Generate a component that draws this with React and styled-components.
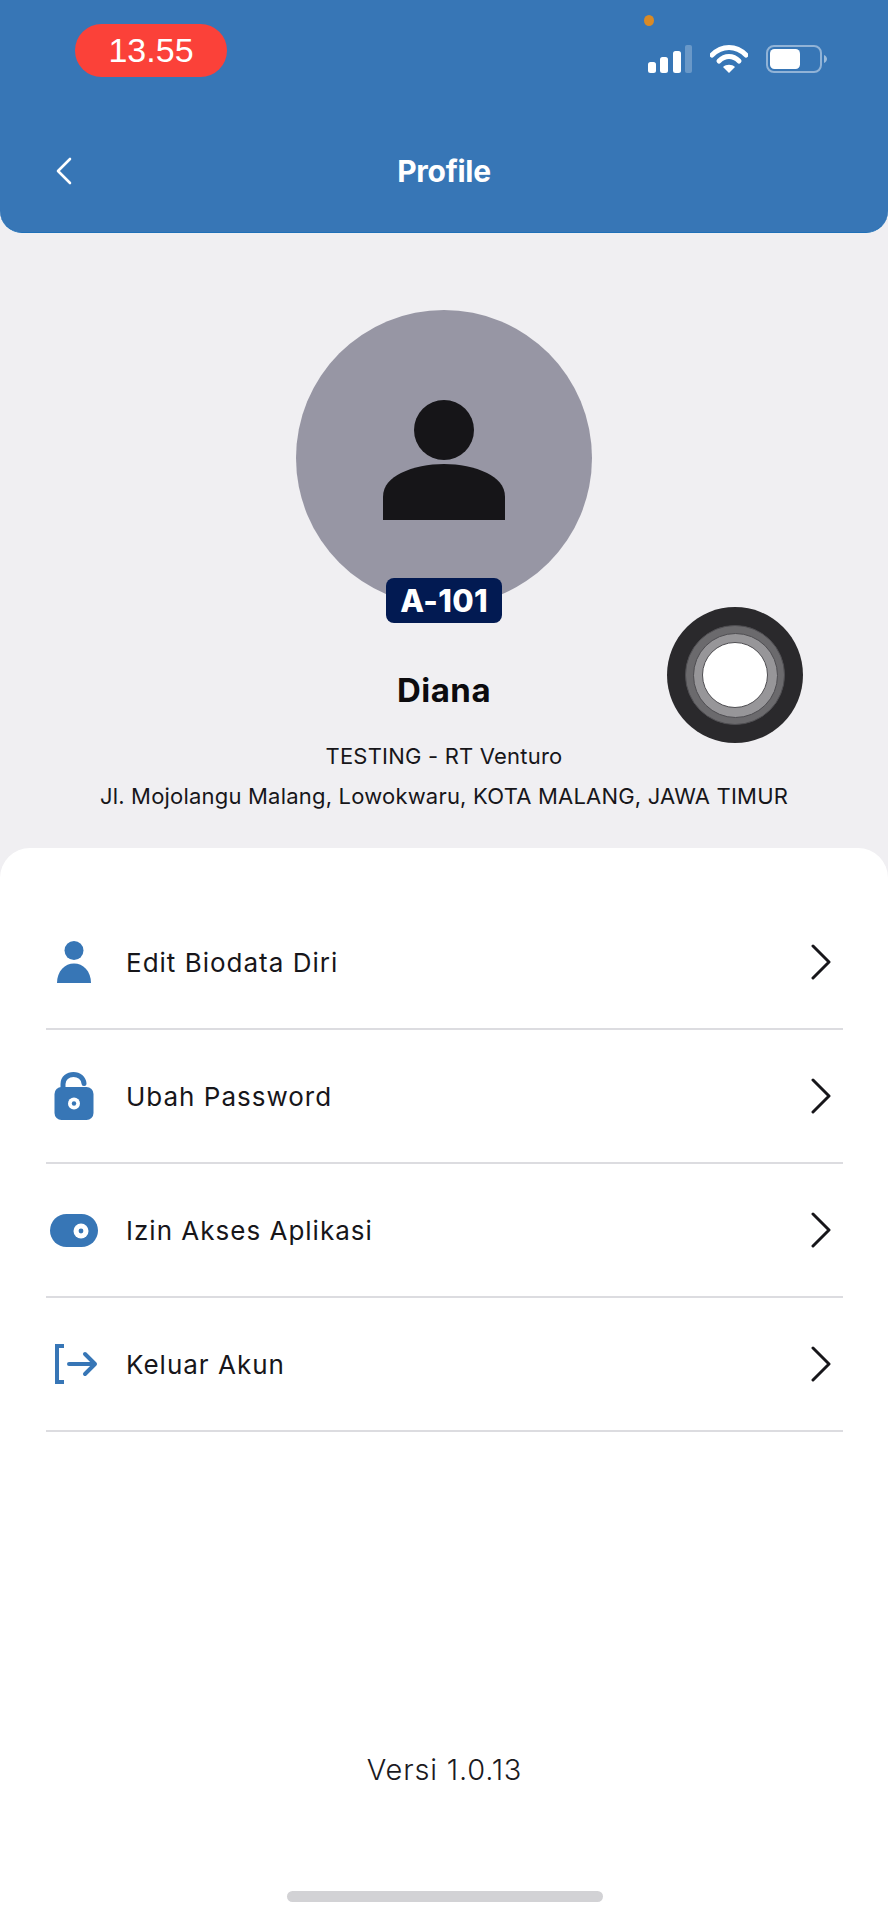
import React from "react";
import styled, { createGlobalStyle } from "styled-components";

const Global = createGlobalStyle`
  html, body { margin: 0; padding: 0; background: #f0eff2; }
  * { box-sizing: border-box; }
`;
const Page = styled.div`
  position: relative; width: 888px; height: 1920px; display: flex; flex-direction: column;
  background: #f0eff2; overflow: hidden; font-family: Inter, "Noto Sans", sans-serif; color: #111014;
`;
const Header = styled.header`
  height: 233px; flex: none; background: #3776b6; border-radius: 0 0 22px 22px;
  border-bottom: 1px solid #1f70b8;
`;
const StatusRow = styled.div`
  display: flex; justify-content: space-between; align-items: flex-start;
  padding: 24px 60px 0 75px;
`;
const TimePill = styled.div`
  width: 152px; height: 53px; border-radius: 27px; background: #fb4139; color: #fff;
  display: flex; align-items: center; justify-content: center;
  font: 400 34px "Liberation Sans", Arial, sans-serif;
`;
const StatusIcons = styled.div`
  display: flex; align-items: center; gap: 18px; margin-top: 21px;
`;
const PrivacyDot = styled.span`
  position: absolute; left: 644px; top: 15px; width: 10px; height: 11px; border-radius: 50%; background: #d98a26;
`;
const NavRow = styled.div`
  display: grid; grid-template-columns: 1fr auto 1fr; align-items: center;
  height: 48px; margin-top: 70px; padding-left: 55px;
`;
const BackButton = styled.div`
  display: flex; align-items: center;
`;
const Title = styled.h1`
  margin: 0 0 0 -55px; font: 700 30px Inter, sans-serif; color: #fff; letter-spacing: -0.3px;
`;
const Profile = styled.section`
  flex: none; height: 615px; padding-top: 77px; display: flex; flex-direction: column; align-items: center;
`;
const Avatar = styled.div`
  position: relative; width: 296px; height: 296px; border-radius: 50%; background: #9796a4;
  display: flex; align-items: center; justify-content: center;
`;
const UnitBadge = styled.div`
  position: absolute; left: 90px; top: 268px; width: 116px; height: 45px; border-radius: 8px;
  background: #021a52; color: #fff; display: flex; align-items: center; justify-content: center;
  font: 800 31px Inter, sans-serif; letter-spacing: 0.3px;
`;
const Name = styled.div`
  margin-top: 64px; font: 700 33px/40px Inter, sans-serif; letter-spacing: 0.5px; color: #0c0b0e;
`;
const InfoLine = styled.div`
  font: 400 ${p => p.$size}px/40px Inter, sans-serif; letter-spacing: ${p => p.$track}px; margin-top: ${p => p.$top}px;
  color: #17161a; white-space: nowrap;
`;
const AssistiveTouch = styled.div`
  position: absolute; left: 667px; top: 607px; width: 136px; height: 136px; border-radius: 50%;
  background: #2a292c; display: flex; align-items: center; justify-content: center;
`;
const Ring = styled.div`
  width: ${p => p.$size}px; height: ${p => p.$size}px; border-radius: 50%; background: ${p => p.$bg};
  display: flex; align-items: center; justify-content: center; border: 1px solid #4f4e52;
`;
const Card = styled.main`
  flex: 1; background: #fff; border-radius: 30px 30px 0 0; padding: 48px 45px 18px 46px;
  display: flex; flex-direction: column; align-items: stretch;
`;
const Row = styled.div`
  height: 134px; display: flex; align-items: center; border-bottom: 2px solid #dcdce0; flex: none;
`;
const IconBox = styled.div`
  width: 56px; display: flex; justify-content: center; margin-right: 24px; flex: none;
`;
const RowLabel = styled.div`
  flex: 1; font: 400 26px Inter, sans-serif; letter-spacing: 1px; color: #17161a;
`;
const Chevron = styled.div`
  width: 32px; display: flex; justify-content: flex-start; margin-right: 2px;
`;
const Version = styled.div`
  margin-top: auto; text-align: center; font: 300 29px/40px Inter, sans-serif; letter-spacing: 0.8px; color: #1b1a1e;
`;
const HomeBar = styled.div`
  align-self: center; width: 316px; height: 11px; border-radius: 6px; background: #d2d2d5; margin-top: 101px;
`;

const Blue = "#3776b6";
const PersonIcon = () => (
  <svg width="36" height="44" viewBox="0 0 36 44">
    <circle cx="18" cy="10.5" r="9.5" fill={Blue} />
    <path d="M1 43 C1 31 9 23.5 18 23.5 C27 23.5 35 31 35 43 Z" fill={Blue} />
  </svg>
);
const LockIcon = () => (
  <svg width="40" height="48" viewBox="0 0 40 48">
    <path d="M9 20 V12 C9 6 14 2.5 19.5 2.5 C25 2.5 29.5 6 30 11.5" fill="none" stroke={Blue} strokeWidth="5" strokeLinecap="round" />
    <rect x="0.5" y="15" width="39" height="33" rx="7" fill={Blue} />
    <circle cx="20" cy="31.5" r="6" fill="#fff" />
    <circle cx="20" cy="31.5" r="2.2" fill={Blue} />
  </svg>
);
const ToggleIcon = () => (
  <svg width="48" height="33" viewBox="0 0 48 33">
    <rect x="0" y="0" width="48" height="33" rx="16.5" fill={Blue} />
    <circle cx="31" cy="17" r="7.5" fill="#fff" />
    <circle cx="31" cy="17" r="2.4" fill={Blue} />
  </svg>
);
const LogoutIcon = () => (
  <svg width="44" height="40" viewBox="0 0 44 40" style={{ marginLeft: 4 }}>
    <path d="M10 2 H3 V38 H10" fill="none" stroke={Blue} strokeWidth="4" />
    <path d="M15 20 H40 M31 10 L41 20 L31 30" fill="none" stroke={Blue} strokeWidth="4" strokeLinecap="round" strokeLinejoin="round" />
  </svg>
);
const RowChevron = () => (
  <svg width="24" height="36" viewBox="0 0 24 36">
    <path d="M4 2 L20 18 L4 34" fill="none" stroke="#17161a" strokeWidth="3" strokeLinecap="round" strokeLinejoin="round" />
  </svg>
);

const items = [
  { label: "Edit Biodata Diri", Icon: PersonIcon },
  { label: "Ubah Password", Icon: LockIcon },
  { label: "Izin Akses Aplikasi", Icon: ToggleIcon },
  { label: "Keluar Akun", Icon: LogoutIcon },
];

export default function App() {
  return (
    <Page>
      <Global />
      <Header>
        <StatusRow>
          <TimePill>13.55</TimePill>
          <StatusIcons>
            <svg width="44" height="28" viewBox="0 0 44 28">
              <rect x="0" y="17" width="8" height="11" rx="2.5" fill="#fff" />
              <rect x="12" y="12" width="8" height="16" rx="2.5" fill="#fff" />
              <rect x="25" y="6" width="8" height="22" rx="2.5" fill="#fff" />
              <rect x="37" y="0" width="7" height="28" rx="2" fill="#fff" opacity="0.25" />
            </svg>
            <svg width="38" height="28" viewBox="0 0 38 28">
              <path d="M2 10 C12 0 26 0 36 10" fill="none" stroke="#fff" strokeWidth="5" strokeLinecap="round" />
              <path d="M9 16 C15 10 23 10 29 16" fill="none" stroke="#fff" strokeWidth="5" strokeLinecap="round" />
              <path d="M13 22 C16 19 22 19 25 22 L19 28 Z" fill="#fff" />
            </svg>
            <svg width="62" height="28" viewBox="0 0 62 28">
              <rect x="1" y="1" width="54" height="26" rx="7" fill="none" stroke="#fff" strokeOpacity="0.45" strokeWidth="2" />
              <rect x="4" y="4" width="30" height="20" rx="4.5" fill="#fff" />
              <path d="M58 10 C60 11 61 12.5 61 14 C61 15.5 60 17 58 18 Z" fill="#fff" fillOpacity="0.5" />
            </svg>
          </StatusIcons>
        </StatusRow>
        <PrivacyDot />
        <NavRow>
          <BackButton>
            <svg width="18" height="28" viewBox="0 0 18 28">
              <path d="M15 2 L3 14 L15 26" fill="none" stroke="#fff" strokeWidth="2.6" strokeLinecap="round" strokeLinejoin="round" />
            </svg>
          </BackButton>
          <Title>Profile</Title>
          <span />
        </NavRow>
      </Header>
      <Profile>
        <Avatar>
          <svg width="122" height="122" viewBox="0 0 122 122" style={{ marginTop: 4 }}>
            <circle cx="61" cy="31" r="30" fill="#161518" />
            <path d="M0 121 V98 C0 86 8 79 18 74 C30 68 46 65 61 65 C76 65 92 68 104 74 C114 79 122 86 122 98 V121 Z" fill="#161518" />
          </svg>
          <UnitBadge>A-101</UnitBadge>
        </Avatar>
        <Name>Diana</Name>
        <InfoLine $size={22} $track={0.2} $top={26}>TESTING - RT Venturo</InfoLine>
        <InfoLine $size={22} $track={0.2} $top={0}>Jl. Mojolangu Malang, Lowokwaru, KOTA MALANG, JAWA TIMUR</InfoLine>
      </Profile>
      <AssistiveTouch>
        <Ring $size={100} $bg="#6b6a6d">
          <Ring $size={85} $bg="#979699">
            <Ring $size={66} $bg="#ffffff" />
          </Ring>
        </Ring>
      </AssistiveTouch>
      <Card>
        {items.map(({ label, Icon }) => (
          <Row key={label}>
            <IconBox><Icon /></IconBox>
            <RowLabel>{label}</RowLabel>
            <Chevron><RowChevron /></Chevron>
          </Row>
        ))}
        <Version>Versi 1.0.13</Version>
        <HomeBar />
      </Card>
    </Page>
  );
}
